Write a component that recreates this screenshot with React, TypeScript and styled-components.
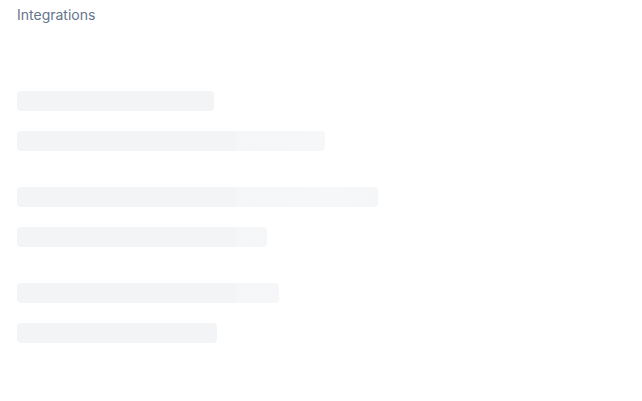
import React from 'react';
import styled, { createGlobalStyle } from 'styled-components';

const GlobalStyle = createGlobalStyle`
  html, body {
    margin: 0;
    padding: 0;
    background: #ffffff;
  }
  body {
    font-family: Inter, "Liberation Sans", sans-serif;
  }
`;

const Page = styled.div`
  box-sizing: border-box;
  width: 642px;
  height: 401px;
  padding: 5px 17px;
  display: flex;
  flex-direction: column;
`;

const Title = styled.div`
  font-size: 14px;
  line-height: 20px;
  color: #64748b;
`;

const Groups = styled.div`
  margin-top: 66px;
  display: flex;
  flex-direction: column;
  gap: 36px;
`;

const Group = styled.div`
  display: flex;
  flex-direction: column;
  gap: 20px;
`;

const Bar = styled.div<{ width: number }>`
  width: ${props => props.width}px;
  height: 20px;
  border-radius: 4px;
  background: linear-gradient(
    90deg,
    #f3f4f6 0px,
    #f3f4f6 236px,
    #f5f6f8 237px,
    #f6f7f9 340px,
    #f3f4f6 420px
  );
  background-attachment: fixed;
`;

const groups = [
  [197, 308],
  [361, 250],
  [262, 200],
];

export default function App() {
  return (
    <>
      <GlobalStyle />
      <Page>
        <Title>Integrations</Title>
        <Groups>
          {groups.map((g, i) => (
            <Group key={i}>
              {g.map((w, j) => (
                <Bar key={j} width={w} />
              ))}
            </Group>
          ))}
        </Groups>
      </Page>
    </>
  );
}
